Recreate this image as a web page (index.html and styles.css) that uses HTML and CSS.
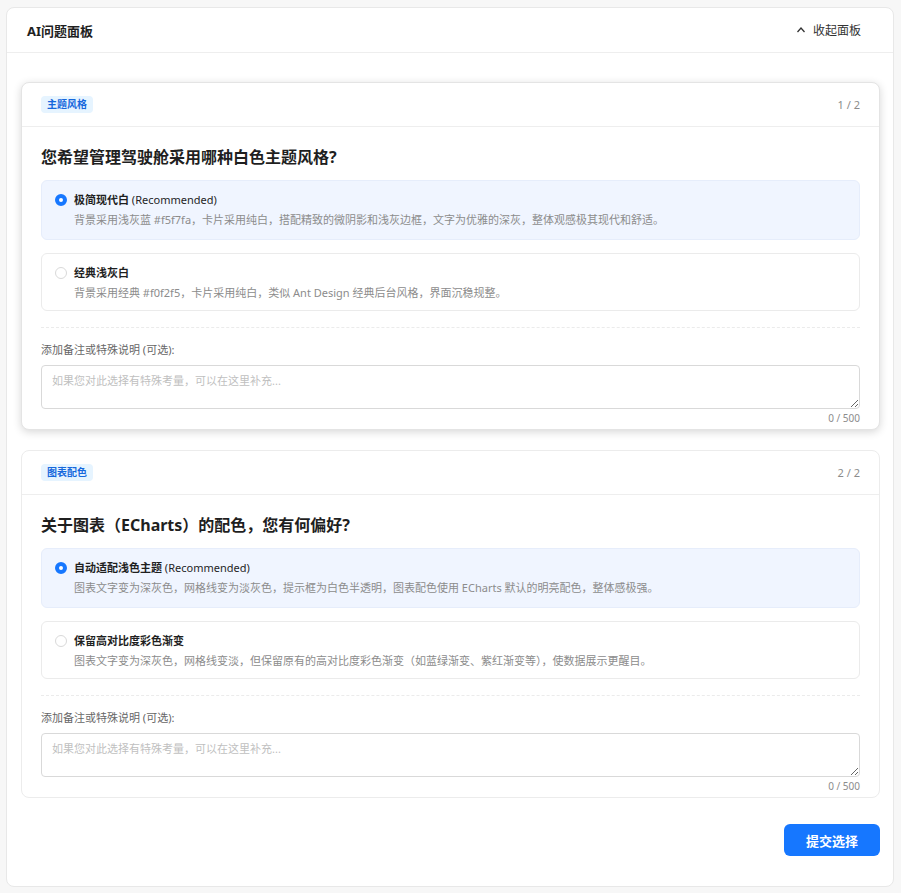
FILE: index.html
```html
<!DOCTYPE html>
<html lang="zh-CN">
<head>
  <meta charset="UTF-8" />
  <meta name="viewport" content="width=device-width, initial-scale=1.0"/>
  <title>AI问题面板</title>
  <link rel="stylesheet" href="styles.css">
</head>
<body>
  <div class="panel">
    <div class="panel-header">
      <div class="panel-title">AI问题面板</div>
      <button class="collapse">
        <svg width="10" height="10" viewBox="0 0 10 10"><path d="M1.5 7 L5 3 L8.5 7" fill="none" stroke="#333" stroke-width="1.3"/></svg>
        收起面板
      </button>
    </div>

    <div class="panel-body">
      <div class="question active">
        <div class="q-header">
          <span class="tag">主题风格</span>
          <span class="step">1 / 2</span>
        </div>
        <div class="q-body">
          <h2 class="q-title">您希望管理驾驶舱采用哪种白色主题风格?</h2>
          <label class="option selected">
            <span class="radio"></span>
            <span class="opt-text">
              <span class="opt-label"><b>极简现代白</b> (Recommended)</span>
              <span class="opt-desc">背景采用浅灰蓝 #f5f7fa，卡片采用纯白，搭配精致的微阴影和浅灰边框，文字为优雅的深灰，整体观感极其现代和舒适。</span>
            </span>
          </label>
          <label class="option">
            <span class="radio"></span>
            <span class="opt-text">
              <span class="opt-label"><b>经典浅灰白</b></span>
              <span class="opt-desc">背景采用经典 #f0f2f5，卡片采用纯白，类似 Ant Design 经典后台风格，界面沉稳规整。</span>
            </span>
          </label>
          <div class="note">
            <div class="note-label">添加备注或特殊说明 (可选):</div>
            <textarea placeholder="如果您对此选择有特殊考量，可以在这里补充..."></textarea>
            <div class="count">0 / 500</div>
          </div>
        </div>
      </div>

      <div class="question">
        <div class="q-header">
          <span class="tag">图表配色</span>
          <span class="step">2 / 2</span>
        </div>
        <div class="q-body">
          <h2 class="q-title">关于图表（ECharts）的配色，您有何偏好?</h2>
          <label class="option selected">
            <span class="radio"></span>
            <span class="opt-text">
              <span class="opt-label"><b>自动适配浅色主题</b> (Recommended)</span>
              <span class="opt-desc">图表文字变为深灰色，网格线变为淡灰色，提示框为白色半透明，图表配色使用 ECharts 默认的明亮配色，整体感极强。</span>
            </span>
          </label>
          <label class="option">
            <span class="radio"></span>
            <span class="opt-text">
              <span class="opt-label"><b>保留高对比度彩色渐变</b></span>
              <span class="opt-desc">图表文字变为深灰色，网格线变淡，但保留原有的高对比度彩色渐变（如蓝绿渐变、紫红渐变等），使数据展示更醒目。</span>
            </span>
          </label>
          <div class="note">
            <div class="note-label">添加备注或特殊说明 (可选):</div>
            <textarea placeholder="如果您对此选择有特殊考量，可以在这里补充..."></textarea>
            <div class="count">0 / 500</div>
          </div>
        </div>
      </div>

      <div class="actions">
        <button class="submit">提交选择</button>
      </div>
    </div>
  </div>
</body>
</html>
```

FILE: styles.css
```css
body {
  margin: 0;
  padding: 7px 7px 9px 6px;
  background: #f7f7f7;
  font-family: "Noto Sans", "Noto Sans CJK SC", sans-serif;
  color: #1f1f1f;
}
.panel {
  background: #ffffff;
  border: 1px solid #e8e8e8;
  border-radius: 8px;
}
.panel-header {
  display: flex;
  justify-content: space-between;
  align-items: center;
  height: 44px;
  padding: 0 18px 0 20px;
  border-bottom: 1px solid #eeeeee;
}
.panel-title {
  font-size: 13px;
  font-weight: bold;
}
.collapse {
  display: flex;
  align-items: center;
  gap: 5px;
  border: none;
  background: none;
  font-family: inherit;
  font-size: 12px;
  color: #333;
  padding: 0 14px 0 0;
  cursor: pointer;
}
.collapse svg {
  margin-right: 2px;
}
.panel-body {
  padding: 29px 13px 30px 14px;
}
.question {
  background: #ffffff;
  border: 1px solid #ececec;
  border-radius: 8px;
  margin-bottom: 20px;
}
.question.active {
  border-color: #e4e4e4;
  box-shadow: 0 2px 8px rgba(0, 0, 0, 0.16);
}
.q-header {
  display: flex;
  justify-content: space-between;
  align-items: center;
  height: 43px;
  padding: 0 19px;
  border-bottom: 1px solid #eeeeee;
}
.tag {
  background: #e6f4ff;
  color: #1668dc;
  font-size: 10px;
  font-weight: bold;
  line-height: 17px;
  padding: 0 6px;
  border-radius: 4px;
}
.step {
  font-size: 11px;
  color: #8c8c8c;
}
.q-body {
  padding: 19px 19px 4px;
}
.q-title {
  margin: 0 0 12px;
  font-size: 16px;
  line-height: 22px;
  font-weight: bold;
}
.option {
  display: flex;
  align-items: flex-start;
  gap: 7px;
  padding: 11px 14px 9px 13px;
  border: 1px solid #ebebeb;
  border-radius: 6px;
  margin-bottom: 13px;
  cursor: pointer;
}
.option.selected {
  background: #f0f5ff;
  border-color: #e6edfb;
  padding-bottom: 11px;
}
.radio {
  flex: none;
  width: 12px;
  height: 12px;
  margin-top: 2px;
  box-sizing: border-box;
  border: 1px solid #d9d9d9;
  border-radius: 50%;
  background: #ffffff;
}
.option.selected .radio {
  border: 4px solid #1677ff;
}
.opt-text {
  display: flex;
  flex-direction: column;
  gap: 4px;
}
.opt-label {
  font-size: 11px;
  line-height: 16px;
  color: #1f1f1f;
}
.opt-desc {
  font-size: 11px;
  line-height: 16px;
  color: #8c8c8c;
}
.note {
  border-top: 1px dashed #ebebeb;
  margin-top: 16px;
  padding-top: 14px;
}
.note-label {
  font-size: 11px;
  line-height: 16px;
  color: #666;
  margin-bottom: 7px;
}
textarea {
  display: block;
  width: 100%;
  height: 44px;
  box-sizing: border-box;
  border: 1px solid #d9d9d9;
  border-radius: 4px;
  padding: 6px 10px;
  font-family: inherit;
  font-size: 11px;
  color: #333;
}
textarea::placeholder {
  color: #bfbfbf;
}
.count {
  text-align: right;
  font-size: 10px;
  line-height: 14px;
  margin-top: 2px;
  color: #8c8c8c;
}
.actions {
  display: flex;
  justify-content: flex-end;
  padding-top: 6px;
}
.submit {
  width: 96px;
  height: 32px;
  border: none;
  border-radius: 6px;
  background: #1677ff;
  color: #ffffff;
  font-family: inherit;
  font-size: 13px;
  font-weight: bold;
  cursor: pointer;
}
```
